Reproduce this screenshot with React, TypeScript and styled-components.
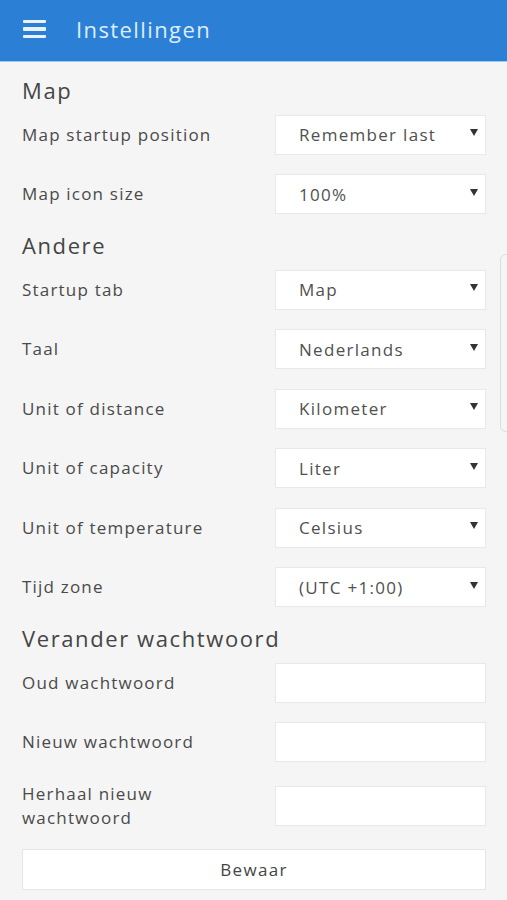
import React from "react";
import styled, { createGlobalStyle } from "styled-components";

const Global = createGlobalStyle`
  html, body { margin: 0; padding: 0; background: #f5f5f5; }
  body { font-family: "Open Sans", "Noto Sans", sans-serif; }
  * { box-sizing: border-box; }
`;

const Page = styled.div`
  position: relative;
  width: 507px;
  min-height: 900px;
  background: #f5f5f5;
  overflow: hidden;
`;

const Header = styled.header`
  height: 62px;
  background: #2b80d5;
  border-bottom: 1px solid #9ccaf3;
  display: flex;
  align-items: center;
  padding-left: 23px;
  gap: 30px;
`;

const Burger = styled.div`
  width: 23px;
  display: flex;
  flex-direction: column;
  gap: 4px;
  margin-top: -3px;
  span {
    display: block;
    height: 3.5px;
    background: #e8f3ff;
    border-radius: 1px;
  }
`;

const Title = styled.h1`
  margin: 0;
  margin-top: -3px;
  font-size: 22px;
  font-weight: 400;
  color: #dcedff;
  letter-spacing: 1.4px;
`;

const Content = styled.main`
  padding: 13px 21px 0 22px;
  display: flex;
  flex-direction: column;
  gap: 16px;
`;

const Section = styled.section`
  display: flex;
  flex-direction: column;
`;

const SectionTitle = styled.h2`
  margin: 0 0 9.5px;
  font-size: 22px;
  line-height: 30px;
  font-weight: 400;
  color: #454545;
  letter-spacing: 1.6px;
`;

const Rows = styled.div`
  display: flex;
  flex-direction: column;
  gap: 19.5px;
`;

const Row = styled.div`
  display: grid;
  grid-template-columns: 1fr 211px;
  column-gap: 12px;
  align-items: center;
  min-height: 40px;
`;

const Label = styled.label`
  font-size: 17px;
  line-height: 24px;
  color: #4a4a4a;
  letter-spacing: 1.2px;
`;

const Box = styled.div`
  height: 40px;
  background: #ffffff;
  border: 1px solid #e9e9e9;
  box-shadow: 0 0 1px rgba(0, 0, 0, 0.04);
  display: flex;
  align-items: center;
  justify-content: space-between;
  padding: 0 7px 0 23px;
  font-size: 17px;
  color: #505050;
  letter-spacing: 1.3px;
`;

const Arrow = styled.span`
  width: 0;
  height: 0;
  border-left: 4px solid transparent;
  border-right: 4px solid transparent;
  border-top: 7px solid #333;
  margin-top: -4px;
`;

const Button = styled.button`
  height: 41px;
  width: 100%;
  margin-top: 19px;
  background: #ffffff;
  border: 1px solid #e6e6e6;
  font-family: inherit;
  font-size: 17px;
  color: #454545;
  letter-spacing: 1.3px;
`;

const ScrollHint = styled.div`
  position: absolute;
  left: 500px;
  top: 254px;
  width: 14px;
  height: 178px;
  border: 1px solid #dcdcdc;
  border-radius: 6px;
`;

const Select = ({ value }: { value: string }) => (
  <Box>
    <span>{value}</span>
    <Arrow />
  </Box>
);

const SelectRow = ({ label, value }: { label: string; value: string }) => (
  <Row>
    <Label>{label}</Label>
    <Select value={value} />
  </Row>
);

const InputRow = ({ label }: { label: string }) => (
  <Row>
    <Label>{label}</Label>
    <Box />
  </Row>
);

export default function App() {
  return (
    <Page>
      <Global />
      <Header>
        <Burger>
          <span />
          <span />
          <span />
        </Burger>
        <Title>Instellingen</Title>
      </Header>
      <Content>
        <Section>
          <SectionTitle>Map</SectionTitle>
          <Rows>
            <SelectRow label="Map startup position" value="Remember last" />
            <SelectRow label="Map icon size" value="100%" />
          </Rows>
        </Section>
        <Section>
          <SectionTitle>Andere</SectionTitle>
          <Rows>
            <SelectRow label="Startup tab" value="Map" />
            <SelectRow label="Taal" value="Nederlands" />
            <SelectRow label="Unit of distance" value="Kilometer" />
            <SelectRow label="Unit of capacity" value="Liter" />
            <SelectRow label="Unit of temperature" value="Celsius" />
            <SelectRow label="Tijd zone" value="(UTC +1:00)" />
          </Rows>
        </Section>
        <Section>
          <SectionTitle>Verander wachtwoord</SectionTitle>
          <Rows>
            <InputRow label="Oud wachtwoord" />
            <InputRow label="Nieuw wachtwoord" />
            <InputRow label="Herhaal nieuw wachtwoord" />
          </Rows>
          <Button>Bewaar</Button>
        </Section>
      </Content>
      <ScrollHint />
    </Page>
  );
}
